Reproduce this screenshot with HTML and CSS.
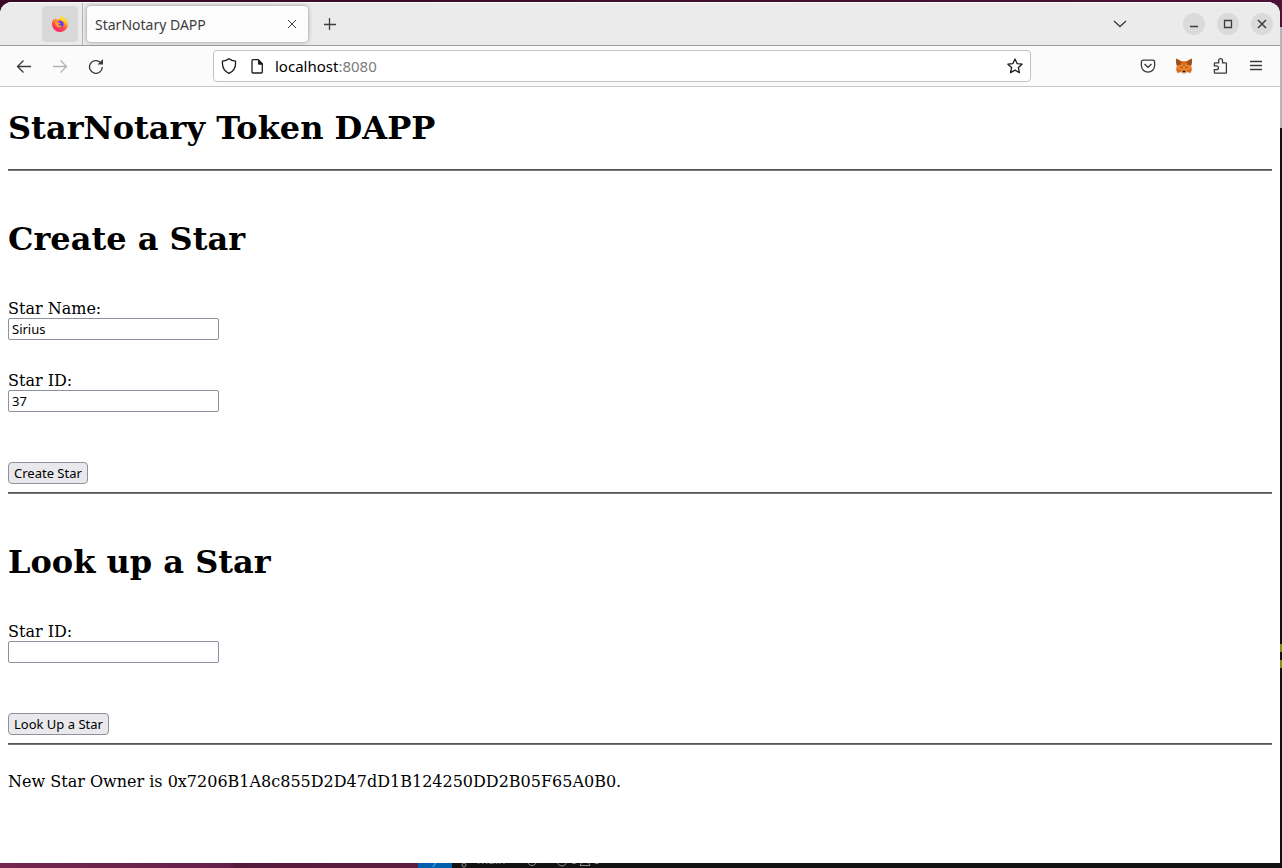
FILE: index.html
```html
<!DOCTYPE html>
<html lang="en">
<head>
<meta charset="utf-8">
<title>StarNotary DAPP</title>
<link rel="stylesheet" href="styles.css">
</head>
<body>
<div class="desktop">
  <div class="window">
    <header class="tabbar">
      <button class="pinned" aria-label="Pinned tab">
        <svg width="16" height="16" viewBox="0 0 16 16">
          <defs>
            <linearGradient id="fire" x1="0.8" y1="0" x2="0.3" y2="1"><stop offset="0" stop-color="#fff044"/><stop offset=".35" stop-color="#ffa51e"/><stop offset=".65" stop-color="#ff4a47"/><stop offset="1" stop-color="#f5206c"/></linearGradient>
          </defs>
          <path fill="url(#fire)" d="M9.800 0c1.400.7 2.200 1.600 2.700 2.600l1-.2C15.200 4 16 6 16 8.200a8 7.800 0 0 1-16 0c0-2 .6-3.800 1.700-5.200l.6 1.200L3.800 2l.7 1.600c1.200-.5 2.300-.7 3.400-.5C8.200 1.800 8.900.7 9.800 0z"/>
          <path fill="#6b3df0" d="M5 6.200C6 4.800 8 4.200 9.600 5c1.500.7 2.300 2 2.100 3.500-.2 1.800-1.700 3.200-3.500 3.200-2 0-3.600-1.500-3.600-3.300 0-.8.1-1.500.4-2.200z"/>
          <path fill="#ff9a26" d="M3 5.800c1.400-.6 2.800-.2 3.600.9l2 .2c-.2.900-1.200 1.100-2 1.400-.1 1 .8 1.600 1.800 1.300.8-.2 1.300 0 1.400.4-.8 1.700-3 2-4.600 1C3.600 9.900 2.600 8 3 5.800z"/>
          <path fill="#ffdc3a" d="M9.800 0c2.200 1.200 2.400 2.700 3.700 4.200 1.200 1.600 1.400 3.300.8 5-.4-1.700-1-3.200-2.600-4.200C10 4 8.600 3.500 8 3.100 8.200 1.800 8.900.7 9.800 0z"/>
        </svg>
      </button>
      <span class="divider"></span>
      <div class="tab">
        <span class="tab-title">StarNotary DAPP</span>
        <button class="tab-close" aria-label="Close tab">
          <svg width="10" height="10" viewBox="0 0 10 10"><path stroke-width="1" d="M1 1l8 8M9 1L1 9"/></svg>
        </button>
      </div>
      <button class="new-tab" aria-label="New tab">
        <svg width="12" height="12" viewBox="0 0 12 12"><path d="M5.500 0v12M0 6.500h12"/></svg>
      </button>
      <button class="list-tabs" aria-label="List all tabs">
        <svg width="14" height="8" viewBox="0 0 14 8"><path d="M1 1l6 5.600L13 1"/></svg>
      </button>
      <div class="controls">
        <button class="control" aria-label="Minimize"><svg width="10" height="10" viewBox="0 0 10 10"><path d="M1 7.500h8"/></svg></button>
        <button class="control" aria-label="Maximize"><svg width="10" height="10" viewBox="0 0 10 10"><path d="M1.500 1.500h7v7h-7z"/></svg></button>
        <button class="control" aria-label="Close"><svg width="10" height="10" viewBox="0 0 10 10"><path stroke-width="1.500" d="M1 1l8 8M9 1L1 9"/></svg></button>
      </div>
    </header>

    <nav class="toolbar">
      <button class="tool" aria-label="Back"><svg width="16" height="16" viewBox="0 0 16 16"><path d="M15 8.500H1.500M7.500 2.500l-6 6 6 6"/></svg></button>
      <button class="tool faded" aria-label="Forward"><svg width="16" height="16" viewBox="0 0 16 16"><path d="M1 8.500h13.500M8.500 2.500l6 6-6 6"/></svg></button>
      <button class="tool" aria-label="Reload"><svg width="16" height="16" viewBox="0 0 16 16"><path d="M14.300 9A6.400 6.400 0 1 1 12.500 4.500"/><path class="solid" d="M15 1v5.500H9.500z"/></svg></button>
      <div class="urlbar">
        <svg width="16" height="16" viewBox="0 0 16 16"><path d="M8 .8C6.500 2 4 3 1.500 3.200 1 8.500 3 13 8 15.400c5-2.400 7-6.900 6.500-12.200C12 3 9.500 2 8 .8z"/></svg>
        <svg width="16" height="16" viewBox="0 0 16 16"><path d="M4 1.700h5.300l4 4V14a1 1 0 0 1-1 1H4a1 1 0 0 1-1-1V2.700a1 1 0 0 1 1-1z"/><path class="solid" d="M9 1.200L13.800 6v.8H10a1 1 0 0 1-1-1z"/></svg>
        <div class="address">localhost<span class="port">:8080</span></div>
        <svg width="16" height="16" viewBox="0 0 16 16"><path stroke-linejoin="round" d="M8 1l2.100 4.600 5 .6-3.700 3.400 1 5L8 12.100l-4.400 2.500 1-5L.9 6.200l5-.6z"/></svg>
      </div>
      <button class="tool" aria-label="Save to Pocket"><svg width="16" height="16" viewBox="0 0 16 16"><path d="M3.200 2.200h9.600A1.800 1.800 0 0 1 14.600 4v3.800a6.600 6.400 0 0 1-13.200 0V4a1.800 1.800 0 0 1 1.800-1.800z"/><path d="M4.500 6L8 9.300 11.500 6"/></svg></button>
      <button class="tool" aria-label="MetaMask">
        <svg class="fox" width="16" height="16" viewBox="0 0 16 16">
          <path fill="#ee8428" d="M.3.600L5.500 3h5L15.700.600 16 4l-.8 3.500.8 3.700-1.400 3.600-3.600-.8-1.800 1.500H6.800L5 14l-3.600.8L0 11.200l.8-3.700L0 4z"/>
          <path fill="#9a4f24" d="M.3.600L6 4.200 4.800 6.800.8 7.500 0 4zM15.700.600L10 4.200l1.200 2.600 4 .7L16 4z"/>
          <path fill="#dc6c1e" d="M5.800 4h4.400L9 9H7zM.2 11.200L4.500 11l.5 3-3.600.8zM15.800 11.200l-4.300-.2-.5 3 3.600.8z"/>
          <path fill="#5b3c2b" d="M4 9l2.200-.3v1.500zM12 9l-2.200-.3v1.500z"/>
          <path fill="#c9b8aa" d="M5.500 13.500h5l-1.300 2H6.800z"/>
          <path fill="#201c1c" d="M6.800 12.800h2.400l.3 1.500h-3z"/>
        </svg>
      </button>
      <button class="tool" aria-label="Extensions"><svg width="16" height="16" viewBox="0 0 16 16"><path d="M3.200 15.200h10.400a.8.800 0 0 0 .8-.8V5.600a.8.800 0 0 0-.8-.8H10.500V2.600a1.900 1.900 0 0 0-3.800 0v2.200H3.200a.8.800 0 0 0-.8.800v2.200h2.200a1.900 1.900 0 0 1 0 3.800H2.400v2.800a.8.800 0 0 0 .8.800z"/></svg></button>
      <button class="tool" aria-label="Menu"><svg width="16" height="16" viewBox="0 0 16 16"><path d="M2 3.500h12M2 7.500h12M2 11.500h12"/></svg></button>
    </nav>

    <main class="page">
      <h1 class="title">StarNotary Token DAPP</h1>
      <hr class="rule">
      <section class="panel">
        <h1 class="heading">Create a Star</h1>
        <div class="field">
          <label for="starName">Star Name:</label>
          <input class="text" type="text" id="starName" value="Sirius">
        </div>
        <div class="field">
          <label for="starId">Star ID:</label>
          <input class="text" type="text" id="starId" value="37">
        </div>
        <button class="action">Create Star</button>
      </section>
      <hr class="rule">
      <section class="panel">
        <h1 class="heading">Look up a Star</h1>
        <div class="field">
          <label for="lookId">Star ID:</label>
          <input class="text" type="text" id="lookId">
        </div>
        <button class="action">Look Up a Star</button>
      </section>
      <hr class="rule">
      <p class="status">New Star Owner is 0x7206B1A8c855D2D47dD1B124250DD2B05F65A0B0.</p>
    </main>
  </div>
  <div class="edge">
    <div class="edge-wallpaper"></div>
    <div class="edge-panel"></div>
    <div class="edge-editor"></div>
    <div class="edge-mark"></div>
    <div class="edge-mark"></div>
  </div>
</div>
<footer class="backdrop">
  <div class="wallpaper"></div>
  <div class="remote"><svg width="12" height="12" viewBox="0 0 12 12"><path d="M8 5L4 11"/></svg></div>
  <div class="branch">
    <svg width="8" height="12" viewBox="0 0 8 12"><circle cx="3" cy="9" r="2"/><path d="M3 7V3"/></svg>
    <span>main</span>
  </div>
  <svg class="sync" width="12" height="12" viewBox="0 0 12 12"><circle cx="6" cy="5" r="4.500"/></svg>
  <div class="problems">
    <svg width="12" height="12" viewBox="0 0 12 12"><circle cx="6" cy="5" r="5"/></svg>
    <span>0</span>
    <svg width="12" height="12" viewBox="0 0 12 12"><path d="M6 1l5 8.500H1z"/></svg>
    <span>0</span>
  </div>
</footer>
</body>
</html>
```
FILE: styles.css
```css
* { box-sizing: border-box; }

body {
  margin: 0;
  min-height: 100vh;
  display: flex;
  flex-direction: column;
  background: linear-gradient(90deg, #360a28, #4a1236);
  font-family: "DejaVu Serif", serif;
  font-size: 16px;
  color: #000;
}

button {
  border: 0;
  padding: 0;
  background: none;
  color: inherit;
}

svg {
  display: block;
  flex: none;
  fill: none;
  stroke: currentColor;
  stroke-width: 1.3;
}

.solid { fill: currentColor; stroke: none; }

.desktop { flex: 1; display: flex; }

.window {
  flex: 1;
  margin-top: 2px;
  display: flex;
  flex-direction: column;
  background: #fff;
  border-radius: 12px 12px 0 0;
  overflow: hidden;
}

.tabbar {
  display: flex;
  align-items: center;
  height: 44px;
  padding: 0 7px 0 42px;
  background: #ebebeb;
  border-top: 1px solid #fafafa;
  border-bottom: 1px solid #9b9b9b;
  color: #3d3d3d;
  font-family: "Noto Sans", sans-serif;
}

.pinned {
  display: grid;
  place-items: center;
  width: 36px;
  height: 36px;
  border-radius: 4px;
  background: #d8d8d8;
}

.pinned svg, .fox { stroke: none; }

.divider {
  align-self: stretch;
  width: 1px;
  margin: 0 4px;
  background: #b4b4b4;
}

.tab {
  display: flex;
  align-items: center;
  justify-content: space-between;
  width: 221px;
  height: 36px;
  padding: 0 6px 0 8px;
  border-radius: 4px;
  background: #fcfcfc;
  box-shadow: 0 0 4px rgba(0, 0, 0, 0.4);
  font-size: 14px;
}

.tab-close, .new-tab, .list-tabs {
  display: grid;
  place-items: center;
  width: 20px;
  height: 24px;
}

.new-tab { margin-left: 12px; }
.list-tabs { margin-left: auto; }

.controls {
  display: flex;
  gap: 12px;
  margin-left: 53px;
}

.control {
  display: grid;
  place-items: center;
  width: 22px;
  height: 22px;
  border-radius: 50%;
  background: #dadada;
}

.toolbar {
  display: flex;
  align-items: center;
  height: 41px;
  padding: 0 6px;
  background: #fbfbfb;
  border-bottom: 1px solid #c6c6c6;
  color: #3a3a3a;
}

.tool {
  display: grid;
  place-items: center;
  width: 36px;
  height: 32px;
}

.faded { color: #b3b3b3; }

.urlbar {
  flex: 1;
  display: flex;
  align-items: center;
  gap: 12px;
  height: 32px;
  margin: 0 99px;
  padding: 0 7px;
  border: 1px solid #c2c2c2;
  border-radius: 4px;
  background: #fff;
  color: #1c1c1c;
  font-family: "Noto Sans", sans-serif;
  font-size: 15px;
}

.address { flex: 1; margin-left: -2px; color: #000; }
.port { color: #7c7c7c; }

.page { padding: 22px 8px 71px; }

.title, .heading {
  margin: 0;
  font-size: 32px;
  line-height: 38px;
  font-weight: bold;
}

.title { margin-bottom: 22px; }

.rule {
  height: 2px;
  margin: 0;
  border: 0;
  border-top: 1px solid #555;
  background: #777;
}

.panel { padding: 49px 0 8px; }
.heading { margin-bottom: 42px; }

.field {
  display: flex;
  flex-direction: column;
  align-items: flex-start;
  margin-bottom: 32px;
  line-height: 18px;
}

.text {
  width: 211px;
  height: 22px;
  padding: 0 3px;
  border: 1px solid #8f8f9d;
  border-radius: 2px;
  background: #fff;
  color: #000;
  font-family: "Noto Sans", sans-serif;
  font-size: 13px;
}

.action {
  display: block;
  height: 22px;
  margin-top: 50px;
  padding: 0 5px;
  border: 1px solid #8f8f9d;
  border-radius: 4px;
  background: #e9e9ed;
  color: #000;
  font-family: "Noto Sans", sans-serif;
  font-size: 13px;
  line-height: 20px;
}

.status { margin: 28px 0 0; line-height: 18px; }

.edge {
  width: 2px;
  display: flex;
  flex-direction: column;
  background: #111;
}

.edge-wallpaper { height: 27px; background: #4a1236; }
.edge-panel { height: 101px; background: #b5b5b5; }
.edge-editor { height: 516px; }
.edge-mark { height: 8px; margin-bottom: 8px; background: #8c8a1c; }

.backdrop {
  display: flex;
  align-items: flex-end;
  height: 5px;
  overflow: hidden;
  background: #111;
  color: #888;
  font-family: "Noto Sans", sans-serif;
  font-size: 12px;
  line-height: 16px;
}

.backdrop svg { stroke-width: 1; }

.wallpaper {
  width: 418px;
  height: 5px;
  background: linear-gradient(90deg, #74264f, #65204a 55%, #541a3c 56%, #5c1d40);
}

.remote {
  display: grid;
  place-items: center;
  width: 34px;
  height: 12px;
  background: #0060ac;
  color: #7fb0dc;
}

.branch { display: flex; align-items: flex-end; gap: 8px; margin-left: 9px; }
.sync { margin-left: 21px; }
.problems { display: flex; align-items: flex-end; gap: 2px; margin-left: 18px; }
```
